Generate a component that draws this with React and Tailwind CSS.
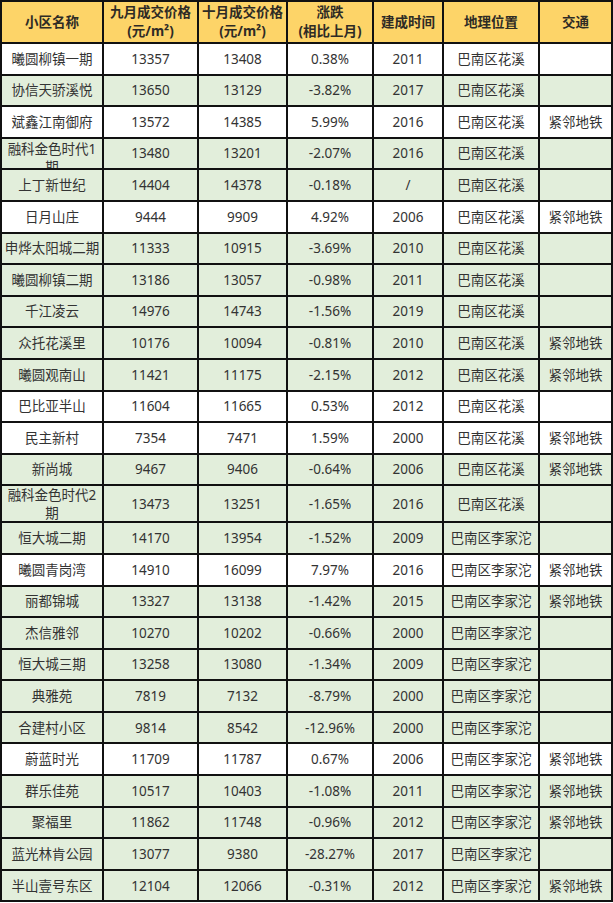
const rows = [
  ['曦圆柳镇一期', '13357', '13408', '0.38%', '2011', '巴南区花溪', '', false],
  ['协信天骄溪悦', '13650', '13129', '-3.82%', '2017', '巴南区花溪', '', true],
  ['斌鑫江南御府', '13572', '14385', '5.99%', '2016', '巴南区花溪', '紧邻地铁', false],
  ['融科金色时代1期', '13480', '13201', '-2.07%', '2016', '巴南区花溪', '', true],
  ['上丁新世纪', '14404', '14378', '-0.18%', '/', '巴南区花溪', '', true],
  ['日月山庄', '9444', '9909', '4.92%', '2006', '巴南区花溪', '紧邻地铁', false],
  ['申烨太阳城二期', '11333', '10915', '-3.69%', '2010', '巴南区花溪', '', true],
  ['曦圆柳镇二期', '13186', '13057', '-0.98%', '2011', '巴南区花溪', '', true],
  ['千江凌云', '14976', '14743', '-1.56%', '2019', '巴南区花溪', '', true],
  ['众托花溪里', '10176', '10094', '-0.81%', '2010', '巴南区花溪', '紧邻地铁', true],
  ['曦圆观南山', '11421', '11175', '-2.15%', '2012', '巴南区花溪', '紧邻地铁', true],
  ['巴比亚半山', '11604', '11665', '0.53%', '2012', '巴南区花溪', '', false],
  ['民主新村', '7354', '7471', '1.59%', '2000', '巴南区花溪', '紧邻地铁', false],
  ['新尚城', '9467', '9406', '-0.64%', '2006', '巴南区花溪', '紧邻地铁', true],
  ['融科金色时代2期', '13473', '13251', '-1.65%', '2016', '巴南区花溪', '', true],
  ['恒大城二期', '14170', '13954', '-1.52%', '2009', '巴南区李家沱', '', true],
  ['曦圆青岗湾', '14910', '16099', '7.97%', '2016', '巴南区李家沱', '紧邻地铁', false],
  ['丽都锦城', '13327', '13138', '-1.42%', '2015', '巴南区李家沱', '紧邻地铁', true],
  ['杰信雅邻', '10270', '10202', '-0.66%', '2000', '巴南区李家沱', '', true],
  ['恒大城三期', '13258', '13080', '-1.34%', '2009', '巴南区李家沱', '', true],
  ['典雅苑', '7819', '7132', '-8.79%', '2000', '巴南区李家沱', '', true],
  ['合建村小区', '9814', '8542', '-12.96%', '2000', '巴南区李家沱', '', true],
  ['蔚蓝时光', '11709', '11787', '0.67%', '2006', '巴南区李家沱', '紧邻地铁', false],
  ['群乐佳苑', '10517', '10403', '-1.08%', '2011', '巴南区李家沱', '紧邻地铁', true],
  ['聚福里', '11862', '11748', '-0.96%', '2012', '巴南区李家沱', '紧邻地铁', true],
  ['蓝光林肯公园', '13077', '9380', '-28.27%', '2017', '巴南区李家沱', '', true],
  ['半山壹号东区', '12104', '12066', '-0.31%', '2012', '巴南区李家沱', '紧邻地铁', true],
]

const cols = 'grid grid-cols-[100px_93px_87px_84px_68px_94px_71px] gap-[2px]'

function Head({ top, bottom }) {
  return (
    <div className="bg-[#fdd468] flex flex-col items-center justify-center text-center leading-[19px] font-bold text-[#2e2b25]">
      <span>{top}</span>
      {bottom && <span>{bottom}</span>}
    </div>
  )
}

export default function App() {
  return (
    <div
      className="w-[613px] bg-[#111] p-[2px] flex flex-col gap-[2px] text-[13.5px] text-[#333]"
      style={{ fontFamily: '"Noto Sans", "Noto Sans CJK SC", sans-serif' }}
    >
      <div className={`${cols} h-[40px]`}>
        <Head top="小区名称" />
        <Head top="九月成交价格" bottom="(元/m²)" />
        <Head top="十月成交价格" bottom="(元/m²)" />
        <Head top="涨跌" bottom="(相比上月)" />
        <Head top="建成时间" />
        <Head top="地理位置" />
        <Head top="交通" />
      </div>

      {rows.map((r, i) => {
        const bg = r[7] ? 'bg-[#e2eedb]' : 'bg-white'
        const tall = r[0] === '融科金色时代2期'
        const clipped = r[0] === '融科金色时代1期'
        return (
          <div key={i} className={`${cols} ${tall ? 'h-[35px]' : 'h-[29.6px]'}`}>
            {clipped || tall ? (
              <div className={`${bg} overflow-hidden text-center leading-[18px] px-[3px] ${clipped ? 'pt-[1px]' : ''}`}>
                {r[0]}
              </div>
            ) : (
              <div className={`${bg} flex items-center justify-center whitespace-nowrap`}>{r[0]}</div>
            )}
            {r.slice(1, 7).map((v, j) => (
              <div key={j} className={`${bg} flex items-center justify-center whitespace-nowrap`}>
                {v}
              </div>
            ))}
          </div>
        )
      })}
    </div>
  )
}
